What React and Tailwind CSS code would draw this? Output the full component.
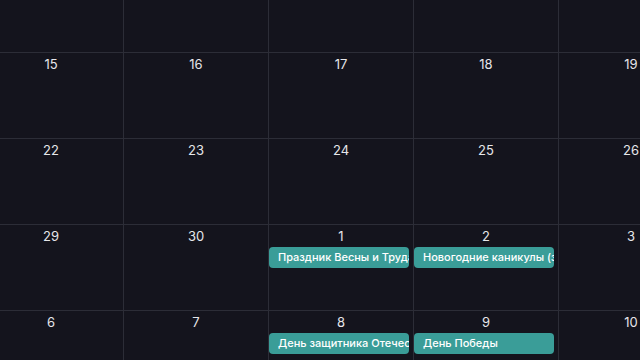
import React from "react";

const rows = [
  [8, 9, 10, 11, 12, 13, 14],
  [15, 16, 17, 18, 19, 20, 21],
  [22, 23, 24, 25, 26, 27, 28],
  [29, 30, 1, 2, 3, 4, 5],
  [6, 7, 8, 9, 10, 11, 12],
];

const events = {
  "3-2": "Праздник Весны и Труда",
  "3-3": "Новогодние каникулы (зимние)",
  "4-2": "День защитника Отечества",
  "4-3": "День Победы",
};

export default function App() {
  return (
    <div
      className="w-[640px] h-[360px] overflow-hidden bg-[#14141d] text-[#e6e6ea]"
      style={{ fontFamily: "Inter, 'Noto Sans', sans-serif" }}
    >
      <div className="ml-[-21px] mt-[-33px] grid grid-cols-[repeat(7,145px)] w-[1015px]">
        {rows.map((row, r) =>
          row.map((d, c) => {
            const ev = events[`${r}-${c}`];
            return (
              <div
                key={`${r}-${c}`}
                className="h-[86px] border-r border-b border-[#2c2d37] flex flex-col items-stretch pt-[3px]"
              >
                <div className="text-center text-[13px] leading-[16px]">{d}</div>
                {ev && (
                  <div className="mt-[3px] mr-[4px] h-[21px] rounded-[4px] bg-[#3a9d98] text-white text-[11px] font-medium leading-[21px] pl-[9px] whitespace-nowrap overflow-hidden">
                    {ev}
                  </div>
                )}
              </div>
            );
          })
        )}
      </div>
    </div>
  );
}
